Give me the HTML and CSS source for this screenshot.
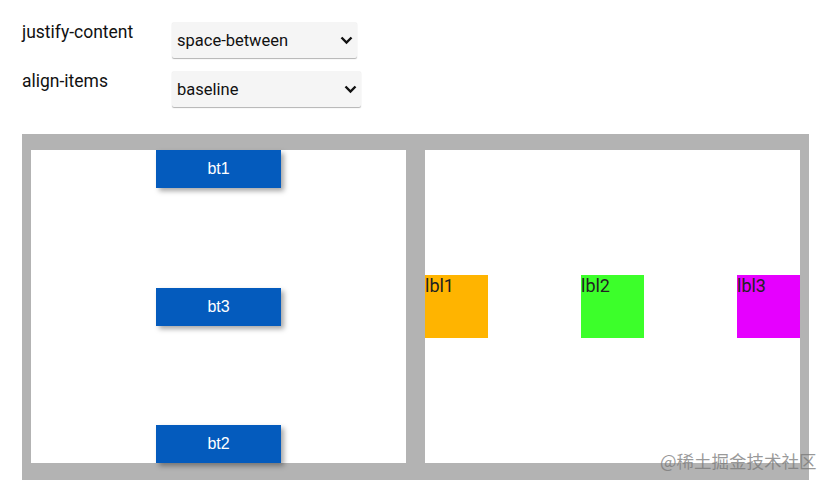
FILE: index.html
```html
<!DOCTYPE html>
<html>
<head>
<meta charset="utf-8">
<link rel="stylesheet" href="styles.css">
</head>
<body>
<div class="controls">
  <div class="row">
    <label class="lbl">justify-content</label>
    <div class="sel sel1"><span>space-between</span>
      <svg class="chev" width="13" height="9" viewBox="0 0 13 9"><path d="M1.5 1.5 L6.5 6.5 L11.5 1.5" fill="none" stroke="#111" stroke-width="2.4"/></svg>
    </div>
  </div>
  <div class="row">
    <label class="lbl">align-items</label>
    <div class="sel sel2"><span>baseline</span>
      <svg class="chev" width="13" height="9" viewBox="0 0 13 9"><path d="M1.5 1.5 L6.5 6.5 L11.5 1.5" fill="none" stroke="#111" stroke-width="2.4"/></svg>
    </div>
  </div>
</div>
<div class="stage">
  <div class="panel col">
    <div class="btn">bt1</div>
    <div class="btn">bt3</div>
    <div class="btn">bt2</div>
  </div>
  <div class="panel rowp">
    <div class="box orange">lbl1</div>
    <div class="box green">lbl2</div>
    <div class="box magenta">lbl3</div>
  </div>
</div>
<div class="wm">@稀土掘金技术社区</div>
</body>
</html>
```
FILE: styles.css
```css
html, body { margin: 0; padding: 0; background: #fff; }
body { width: 834px; height: 486px; position: relative; overflow: hidden; font-family: Roboto, "Liberation Sans", sans-serif; }
.controls { padding: 22px 0 0 22px; display: flex; flex-direction: column; gap: 13px; }
.row { display: flex; align-items: flex-start; }
.lbl { width: 150px; font-size: 17.5px; color: #111; line-height: 20px; padding-top: 0; }
.sel { position: relative; height: 36px; background: #f5f5f5; box-shadow: 0 1px 1px rgba(0,0,0,0.3); border-radius: 2px; display: flex; align-items: center; padding-left: 5px; box-sizing: border-box; font-size: 16.5px; color: #111; }
.sel1 { width: 185px; }
.sel2 { width: 189px; }
.chev { position: absolute; right: 4px; top: 14px; }
.stage { margin: 27px 0 0 22px; width: 787px; height: 346px; background: #b3b3b3; box-sizing: border-box; padding: 16px 9px 17px 9px; display: flex; gap: 19px; }
.panel { width: 375px; height: 313px; background: #fff; display: flex; }
.col { flex-direction: column; justify-content: space-between; align-items: center; }
.btn { width: 125px; height: 38px; background: #045bbd; color: #fff; font-family: "Liberation Sans", Arial, sans-serif; font-size: 16px; display: flex; align-items: center; justify-content: center; box-shadow: 3px 3px 5px rgba(0,0,0,0.35); }
.rowp { justify-content: space-between; align-items: center; }
.box { width: 63px; height: 63px; font-size: 18px; color: #222; line-height: 22px; }
.orange { background: #ffb400; }
.green { background: #3cff2a; }
.magenta { background: #e600ff; }
.wm { position: absolute; left: 660px; top: 450px; font-family: "Noto Sans CJK SC", sans-serif; font-size: 17.5px; color: rgba(120,120,120,0.75); line-height: 22px; white-space: nowrap; }
```
